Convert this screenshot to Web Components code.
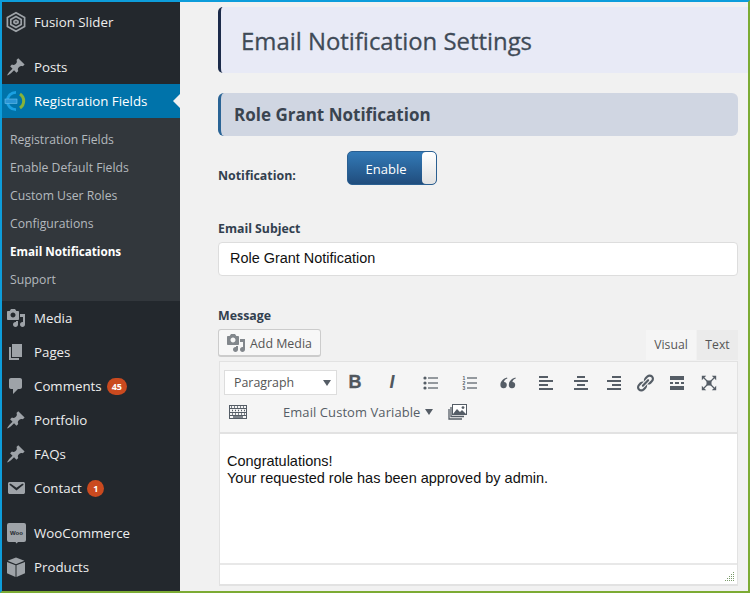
<!DOCTYPE html>
<html lang="en">
<head>
<meta charset="utf-8">
<title>Email Notification Settings</title>
<style>
  html, body { margin: 0; padding: 0; background: #f1f1f1; }
  body { font-family: "Open Sans", "Liberation Sans", sans-serif; }
</style>
</head>
<body>
<admin-frame>
  <admin-sidebar slot="side">
    <menu-item icon="fusion" label="Fusion Slider"></menu-item>
    <menu-item icon="pin" label="Posts" gap></menu-item>
    <menu-item icon="reg" label="Registration Fields" active></menu-item>
    <sub-menu>
      <sub-item>Registration Fields</sub-item>
      <sub-item>Enable Default Fields</sub-item>
      <sub-item>Custom User Roles</sub-item>
      <sub-item>Configurations</sub-item>
      <sub-item current>Email Notifications</sub-item>
      <sub-item>Support</sub-item>
    </sub-menu>
    <menu-item icon="media" label="Media"></menu-item>
    <menu-item icon="page" label="Pages"></menu-item>
    <menu-item icon="comment" label="Comments" badge="45"></menu-item>
    <menu-item icon="pin" label="Portfolio"></menu-item>
    <menu-item icon="pin" label="FAQs"></menu-item>
    <menu-item icon="mail" label="Contact" badge="1"></menu-item>
    <menu-item icon="woo" label="WooCommerce" gap></menu-item>
    <menu-item icon="box" label="Products"></menu-item>
  </admin-sidebar>
  <settings-page>
    <page-title>Email Notification Settings</page-title>
    <section-title>Role Grant Notification</section-title>
    <toggle-row label="Notification:" state="Enable"></toggle-row>
    <text-field label="Email Subject" value="Role Grant Notification"></text-field>
    <message-editor label="Message">
      <p>Congratulations!</p>
      <p>Your requested role has been approved by admin.</p>
    </message-editor>
  </settings-page>
</admin-frame>

<script>
const ICONS = {
  pin: '<path d="M10.44 3.02l1.82-1.82 6.36 6.35-1.83 1.82c-1.05-.68-2.48-.57-3.41.36l-.75.75c-.92.93-1.04 2.35-.35 3.41l-1.83 1.82-2.41-2.41-2.8 2.79c-.42.42-3.38 2.71-3.8 2.29s1.86-3.39 2.28-3.81l2.79-2.79L4.1 9.36l1.83-1.82c1.05.69 2.48.57 3.4-.36l.75-.75c.93-.92 1.05-2.35.36-3.41z"/>',
  media: '<path d="M13 11V4c0-.55-.45-1-1-1h-1.67L9 1H5L3.67 3H2c-.55 0-1 .45-1 1v7c0 .55.45 1 1 1h10c.55 0 1-.45 1-1zM7 4.5c1.38 0 2.5 1.12 2.5 2.5S8.38 9.5 7 9.5 4.5 8.38 4.5 7 5.62 4.5 7 4.5zM14 6h5v10.5c0 1.38-1.12 2.5-2.5 2.5S14 17.88 14 16.5s1.12-2.5 2.5-2.5c.17 0 .34.02.5.05V9h-3V6zm-4 8.05V13h2v3.5c0 1.38-1.12 2.5-2.5 2.5S7 17.88 7 16.5 8.12 14 9.5 14c.17 0 .34.02.5.05z"/>',
  page: '<path d="M6 15V2h10v13H6zm-1 1h8v2H3V5h2v11z"/>',
  comment: '<path d="M5 2h9c1.1 0 2 .9 2 2v7c0 1.1-.9 2-2 2h-2l-5 5v-5H5c-1.1 0-2-.9-2-2V4c0-1.1.9-2 2-2z"/>',
  mail: '<path d="M3.87 4h13.25C18.37 4 19 4.59 19 5.79v8.42c0 1.19-.63 1.79-1.88 1.79H3.87c-1.25 0-1.88-.6-1.88-1.79V5.79c0-1.2.63-1.79 1.88-1.79zm6.62 8.6l6.74-5.53c.24-.2.43-.66.13-1.07-.29-.41-.82-.42-1.17-.17l-5.7 3.86L4.8 5.83c-.35-.25-.88-.24-1.17.17-.3.41-.11.87.13 1.07z"/>',
  box: '<path d="M10 .6l8.4 3.2-8.4 3.4-8.400-3.400z"/><path d="M1 5l8.500 3.300V20L1 16.200z"/><path d="M19 5l-8.500 3.300V20l8.500-3.800z"/>',
  woo: '<path d="M3 0h15a2 2 0 0 1 2 2v15a2 2 0 0 1-2 2h-6l-1.500 1.400L9.500 19H3a2 2 0 0 1-2-2V2a2 2 0 0 1 2-2z"/><text x="10.500" y="12" font-family="Liberation Sans, sans-serif" font-size="6" font-weight="700" text-anchor="middle" fill="#23282d">Woo</text>',
  fusion: '<g fill="none" stroke="currentColor" stroke-width="1.700"><path d="M10 .8l8.600 4.800v8.800L10 19.200l-8.600-4.800V5.600z"/><path d="M10 4.600l5.200 3v4.800l-5.200 3-5.200-3V7.600z"/><path d="M10 8.200l2 1.100v1.400l-2 1.100-2-1.100V9.300z"/></g>',
  reg: '<path d="M10 1.300a8.700 8.700 0 1 0 0 17.400" fill="none" stroke="#1ba0e2" stroke-width="2.800"/><path d="M14 3a8.500 8.500 0 0 1 0 14" fill="none" stroke="#86b33a" stroke-width="3"/><rect x="-1" y="8" width="12" height="4.400" fill="#2a95d5" stroke="#6cc0ee" stroke-width=".6"/>'
};

function svgIcon(name, size) {
  return `<svg viewBox="0 0 20 20" width="${size}" height="${size}" fill="currentColor" overflow="visible" aria-hidden="true">${ICONS[name]}</svg>`;
}

function define(tag, html) {
  customElements.define(tag, class extends HTMLElement {
    constructor() {
      super();
      this.attachShadow({mode: "open"});
    }
    connectedCallback() {
      this.shadowRoot.innerHTML = typeof html === "function" ? html(this) : html;
    }
  });
}

define("admin-frame", `
  <style>
    :host {
      display: flex;
      box-sizing: border-box;
      width: 750px;
      height: 593px;
      overflow: hidden;
      border-style: solid;
      border-width: 2px;
      border-color: #0d9ddb #7cab34 #7cab34 #0d9ddb;
      background: #f1f1f1;
    }
  </style>
  <slot name="side"></slot>
  <slot></slot>
`);

define("admin-sidebar", `
  <style>
    :host {
      display: block;
      flex: none;
      width: 178px;
      padding-top: 3px;
      background: #23282d;
    }
  </style>
  <slot></slot>
`);

define("menu-item", el => {
  const badge = el.getAttribute("badge");
  return `
  <style>
    :host {
      display: flex;
      align-items: center;
      height: 34px;
      color: #eee;
      font-size: 13.3px;
      position: relative;
      ${el.hasAttribute("gap") ? "margin-top: 11px;" : ""}
      ${el.hasAttribute("active") ? "background: #0073aa; color: #fff;" : ""}
    }
    .icon {
      width: 28px;
      margin-right: 4px;
      display: flex;
      justify-content: center;
      color: #9ea3a8;
      flex: none;
    }
    .badge {
      display: inline-block;
      min-width: 8px;
      height: 17px;
      line-height: 17px;
      padding: 0 4.5px;
      margin-left: 5.5px;
      border-radius: 9px;
      background: #ca4a1f;
      color: #fff;
      font-size: 9px;
      font-weight: 700;
      text-align: center;
    }
    .arrow {
      position: absolute;
      right: 0;
      top: 10px;
      border: 7px solid transparent;
      border-right-color: #f1f1f1;
      border-left-width: 0;
    }
  </style>
  <span class="icon">${svgIcon(el.getAttribute("icon"), 20)}</span>
  <span>${el.getAttribute("label")}</span>
  ${badge ? `<span class="badge">${badge}</span>` : ""}
  ${el.hasAttribute("active") ? `<span class="arrow"></span>` : ""}
`;
});

define("sub-menu", `
  <style>
    :host {
      display: block;
      padding: 8px 0 7px;
      background: #32373c;
    }
  </style>
  <slot></slot>
`);

define("sub-item", el => `
  <style>
    :host {
      display: block;
      height: 28px;
      line-height: ${el.hasAttribute("current") ? "26px" : "28px"};
      padding-left: 8px;
      font-size: ${el.hasAttribute("current") ? "11.7px" : "12.2px"};
      color: ${el.hasAttribute("current") ? "#fff" : "#b4b9be"};
      font-weight: ${el.hasAttribute("current") ? "700" : "400"};
    }
  </style>
  <slot></slot>
`);

define("settings-page", `
  <style>
    :host {
      display: flex;
      flex-direction: column;
      flex: 1;
      min-width: 0;
      padding: 5px 0 0 38px;
      color: #32373c;
    }
  </style>
  <slot></slot>
`);

define("page-title", `
  <style>
    :host {
      display: flex;
      align-items: center;
      box-sizing: border-box;
      height: 66px;
      padding-left: 20px;
      background: #e8eaf6;
      border-left: 3px solid #1c2b4a;
      border-radius: 5px 0 0 5px;
      color: #3f4a57;
      font-size: 23.9px;
      -webkit-text-stroke: .3px #3f4a57;
    }
  </style>
  <slot></slot>
`);

define("section-title", `
  <style>
    :host {
      display: flex;
      align-items: center;
      box-sizing: border-box;
      height: 43px;
      margin: 20px 10px 0 0;
      padding-left: 13px;
      background: #d0d6e2;
      border-left: 3px solid #2a6496;
      border-radius: 6px;
      color: #3a4450;
      font-size: 17px;
      font-weight: 700;
    }
  </style>
  <slot></slot>
`);

define("toggle-row", el => `
  <style>
    :host {
      display: flex;
      align-items: flex-end;
      margin-top: 15px;
    }
    .label {
      width: 129px;
      font-size: 12.4px;
      font-weight: 700;
      color: #32404f;
      line-height: 18px;
    }
    .toggle {
      display: flex;
      box-sizing: border-box;
      width: 90px;
      height: 34px;
      border: 1px solid #2a5f91;
      border-radius: 5px;
      overflow: hidden;
      background: linear-gradient(#337ab7, #204d7d);
    }
    .on {
      flex: 1;
      display: flex;
      align-items: center;
      justify-content: center;
      padding: 1px 0 0 2px;
      color: #fff;
      font-size: 13px;
    }
    .knob {
      width: 14px;
      background: linear-gradient(#fff, #e2e2e2);
      border-radius: 4px;
    }
  </style>
  <span class="label">${el.getAttribute("label")}</span>
  <span class="toggle"><span class="on">${el.getAttribute("state")}</span><span class="knob"></span></span>
`);

define("text-field", el => `
  <style>
    :host {
      display: block;
      margin: 35px 10px 0 0;
    }
    .label {
      font-size: 12.3px;
      font-weight: 700;
      color: #32404f;
      line-height: 18px;
      margin-bottom: 4px;
    }
    .input {
      box-sizing: border-box;
      height: 34px;
      padding: 0 11px;
      background: #fff;
      border: 1px solid #ddd;
      border-radius: 4px;
      font: 14.45px/31px "Liberation Sans", Arial, sans-serif;
      color: #111;
    }
  </style>
  <div class="label">${el.getAttribute("label")}</div>
  <div class="input">${el.getAttribute("value")}</div>
`);

define("message-editor", el => `
  <style>
    :host {
      display: block;
      margin: 31px 10px 0 0;
    }
    .label {
      font-size: 12.4px;
      font-weight: 700;
      color: #32404f;
      line-height: 18px;
    }
    .top {
      display: flex;
      justify-content: space-between;
      align-items: flex-start;
      height: 32px;
      margin-top: 4px;
    }
    .add {
      display: flex;
      align-items: center;
      gap: 4px;
      box-sizing: border-box;
      width: 103px;
      height: 28px;
      padding-left: 7px;
      background: #f7f7f7;
      border: 1px solid #ccc;
      border-bottom-width: 2px;
      border-radius: 3px;
      font-size: 12.4px;
      color: #555;
    }
    .add svg { color: #82878c; }
    .add span { padding-top: 1px; }
    .tabs {
      display: flex;
      gap: 1px;
      margin-top: 1px;
      font-size: 12.2px;
      color: #555;
    }
    .tabs span {
      display: flex;
      align-items: center;
      justify-content: center;
      height: 30px;
      padding-bottom: 2px;
      box-sizing: border-box;
    }
    .visual { width: 50px; background: #f5f5f5; }
    .text { width: 41px; background: #ebebeb; }
    .editor {
      margin-left: 1px;
      border: 1px solid #e2e2e2;
      border-bottom-width: 2px;
      background: #fff;
    }
    .toolbar {
      box-sizing: border-box;
      height: 72px;
      padding: 8px 0 0 4px;
      background: #f5f5f5;
      border-bottom: 2px solid #e2e2e2;
      color: #555d66;
    }
    .row1 {
      display: grid;
      grid-template-columns: 113px 36px 38px 40px 38px 38px 37px 34px 31px 32px 32px 32px;
      height: 25px;
      align-items: center;
    }
    .row2 {
      display: flex;
      align-items: center;
      height: 24px;
      margin-top: 5px;
    }
    .btn {
      display: flex;
      align-items: center;
      justify-content: center;
    }
    .select {
      display: flex;
      align-items: center;
      justify-content: space-between;
      box-sizing: border-box;
      height: 25px;
      padding: 0 5px 0 9px;
      background: #fff;
      border: 1px solid #ddd;
      font-size: 12.4px;
      color: #555;
    }
    .caret {
      width: 0;
      height: 0;
      border: 4.5px solid transparent;
      border-top: 6px solid #555d66;
      border-bottom-width: 0;
    }
    .b { font: 700 18px "Liberation Sans", sans-serif; color: #50575e; -webkit-text-stroke: .3px #50575e; }
    .i { font: italic 700 18px "Liberation Sans", sans-serif; color: #50575e; }
    .kbd { width: 28px; }
    .variable {
      display: flex;
      align-items: center;
      gap: 5px;
      margin-left: 31px;
      font-size: 12.95px;
      color: #555d66;
      letter-spacing: .1px;
    }
    .stack { margin-left: 15px; display: flex; }
    .content {
      box-sizing: border-box;
      height: 129px;
      padding: 19px 7px 0;
      font: 14.5px/17px "Liberation Sans", Arial, sans-serif;
      color: #111;
    }
    ::slotted(p) { margin: 0; }
    .status {
      position: relative;
      box-sizing: border-box;
      height: 21px;
      border-top: 2px solid #e8e8e8;
    }
    .grip {
      position: absolute;
      right: 2px;
      bottom: 2px;
    }
  </style>
  <div class="label">${el.getAttribute("label")}</div>
  <div class="top">
    <span class="add">${svgIcon("media", 20)}<span>Add Media</span></span>
    <span class="tabs"><span class="visual">Visual</span><span class="text">Text</span></span>
  </div>
  <div class="editor">
    <div class="toolbar">
      <div class="row1">
        <span class="select"><span>Paragraph</span><span class="caret"></span></span>
        <span class="btn b">B</span>
        <span class="btn i">I</span>
        <span class="btn"><svg width="16" height="14" viewBox="0 0 16 14" fill="currentColor"><circle cx="2" cy="2" r="1.600"/><circle cx="2" cy="7" r="1.600"/><circle cx="2" cy="12" r="1.600"/><rect x="5" y="1.400" width="10" height="1.200"/><rect x="5" y="6.400" width="10" height="1.200"/><rect x="5" y="11.400" width="10" height="1.200"/></svg></span>
        <span class="btn"><svg width="16" height="14" viewBox="0 0 16 14" fill="currentColor"><g font-family="Liberation Sans, sans-serif" font-size="5" font-weight="700"><text x=".4" y="4">1</text><text x=".4" y="9">2</text><text x=".4" y="14">3</text></g><rect x="5" y="1.400" width="10" height="1.200"/><rect x="5" y="6.400" width="10" height="1.200"/><rect x="5" y="11.400" width="10" height="1.200"/></svg></span>
        <span class="btn"><svg width="16" height="12" viewBox="0 0 16 12" fill="currentColor"><path d="M7 .5C3.500 1.600.4 4 .4 8a3.200 3.200 0 1 0 3.600-3.100C4.300 3.400 5.500 2.300 7.400 1.600z"/><path d="M15.400.5c-3.500 1.100-6.600 3.500-6.600 7.500a3.200 3.200 0 1 0 3.600-3.100c.3-1.500 1.500-2.600 3.400-3.300z"/></svg></span>
        <span class="btn"><svg width="20" height="20" viewBox="0 0 20 20" fill="currentColor"><path d="M12 5V3H3v2h9zm5 4V7H3v2h14zm-5 4v-2H3v2h9zm5 4v-2H3v2h14z"/></svg></span>
        <span class="btn"><svg width="20" height="20" viewBox="0 0 20 20" fill="currentColor"><path d="M14 5V3H6v2h8zm3 4V7H3v2h14zm-3 4v-2H6v2h8zm3 4v-2H3v2h14z"/></svg></span>
        <span class="btn"><svg width="20" height="20" viewBox="0 0 20 20" fill="currentColor"><path d="M17 5V3H8v2h9zm0 4V7H3v2h14zm0 4v-2H8v2h9zm0 4v-2H3v2h14z"/></svg></span>
        <span class="btn"><svg width="20" height="20" viewBox="0 0 20 20" fill="currentColor"><path d="M17.740 2.760c1.680 1.690 1.680 4.410 0 6.100l-1.530 1.520c-1.120 1.120-2.700 1.470-4.140 1.090l2.620-2.610.76-.77.76-.76c.84-.84.84-2.200 0-3.040-.84-.85-2.200-.85-3.040 0l-.77.76-3.380 3.380c-.37-1.440-.02-3.020 1.100-4.140l1.520-1.530c1.690-1.680 4.420-1.680 6.100 0zM8.590 13.430l5.340-5.340c.42-.42.42-1.100 0-1.520-.44-.43-1.130-.39-1.530 0l-5.330 5.340c-.42.42-.42 1.100 0 1.520.44.43 1.130.39 1.520 0zm-.76 2.290l4.140-4.150c.38 1.440.03 3.020-1.090 4.140l-1.520 1.530c-1.690 1.680-4.410 1.680-6.100 0-1.680-1.680-1.680-4.420 0-6.100l1.530-1.520c1.120-1.120 2.700-1.470 4.140-1.100l-4.140 4.150c-.85.840-.85 2.200 0 3.050.84.840 2.200.840 3.040 0z"/></svg></span>
        <span class="btn"><svg width="20" height="20" viewBox="0 0 20 20" fill="currentColor"><path d="M17 7V3H3v4h14zM6 11V9H3v2h3zm6 0V9H8v2h4zm5 0V9h-3v2h3zm0 6v-4H3v4h14z"/></svg></span>
        <span class="btn"><svg width="16" height="16" viewBox="0 0 16 16" fill="currentColor"><path d="M.8.8h4.400L.8 5.200z"/><path d="M15.200.8v4.400L10.800.8z"/><path d="M.8 15.200v-4.400l4.400 4.400z"/><path d="M15.200 15.200h-4.400l4.400-4.400z"/><path d="M5.500 5.500h5v5h-5z"/><path d="M3 3l10 10M13 3L3 13" stroke="currentColor" stroke-width="1.200"/></svg></span>
      </div>
      <div class="row2">
        <span class="btn kbd"><svg width="18" height="14" viewBox="0 0 18 14" fill="none" stroke="currentColor"><rect x=".5" y=".5" width="17" height="13"/><path d="M.5 3.500h17M.5 7.500h17M.5 10.500h17"/><path d="M2 2h1M5 2h1M8 2h1M11 2h1M14 2h1M3 5.500h1M6 5.500h1M9 5.500h1M12 5.500h1M15 5.500h1M3 9h1M6 9h1M9 9h1M12 9h1M15 9h1M4 12h10" stroke-width="1.400"/></svg></span>
        <span class="variable"><span>Email Custom Variable</span><span class="caret"></span></span>
        <span class="stack"><svg width="19" height="16" viewBox="0 0 19 16"><rect x="4.500" y=".5" width="14" height="10" fill="#fff" stroke="#555d66"/><path d="M5 10l4-5 3 3 2-2 4 4z" fill="#555d66"/><circle cx="15" cy="3.600" r="1.400" fill="#555d66"/><path d="M3 3v9.500h13M1 5v10h13" fill="none" stroke="#555d66" stroke-width="1.300"/></svg></span>
      </div>
    </div>
    <div class="content"><slot></slot></div>
    <div class="status"><svg class="grip" width="10" height="10" viewBox="0 0 10 10" fill="#7a9a6a"><rect x="8" y="0" width="1" height="1"/><rect x="6" y="2" width="1" height="1"/><rect x="8" y="2" width="1" height="1"/><rect x="4" y="4" width="1" height="1"/><rect x="6" y="4" width="1" height="1"/><rect x="8" y="4" width="1" height="1"/><rect x="2" y="6" width="1" height="1"/><rect x="4" y="6" width="1" height="1"/><rect x="6" y="6" width="1" height="1"/><rect x="8" y="6" width="1" height="1"/><rect x="0" y="8" width="1" height="1"/><rect x="2" y="8" width="1" height="1"/><rect x="4" y="8" width="1" height="1"/><rect x="6" y="8" width="1" height="1"/><rect x="8" y="8" width="1" height="1"/></svg></div>
  </div>
`);
</script>
</body>
</html>
